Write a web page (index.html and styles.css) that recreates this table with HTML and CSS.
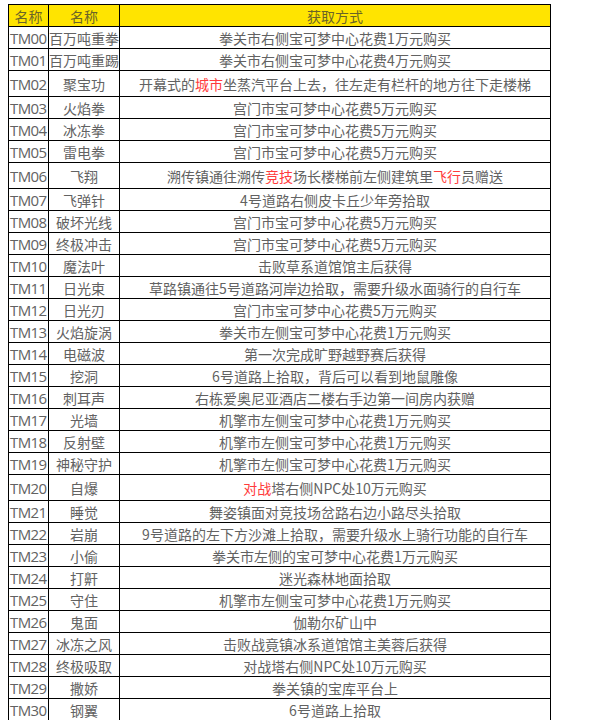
FILE: index.html
```html
<!DOCTYPE html>
<html lang="zh">
<head>
<meta charset="utf-8">
<link rel="stylesheet" href="styles.css">
</head>
<body>
<table class="tm">
<colgroup><col class="c1"><col class="c2"><col class="c3"></colgroup>
<tr class="head"><th>名称</th><th>名称</th><th>获取方式</th></tr>
<tr><td>TM00</td><td>百万吨重拳</td><td>拳关市右侧宝可梦中心花费1万元购买</td></tr>
<tr><td>TM01</td><td>百万吨重踢</td><td>拳关市右侧宝可梦中心花费4万元购买</td></tr>
<tr class="tall"><td>TM02</td><td>聚宝功</td><td>开幕式的<span class="red">城市</span>坐蒸汽平台上去，往左走有栏杆的地方往下走楼梯</td></tr>
<tr><td>TM03</td><td>火焰拳</td><td>宫门市宝可梦中心花费5万元购买</td></tr>
<tr><td>TM04</td><td>冰冻拳</td><td>宫门市宝可梦中心花费5万元购买</td></tr>
<tr><td>TM05</td><td>雷电拳</td><td>宫门市宝可梦中心花费5万元购买</td></tr>
<tr class="tall"><td>TM06</td><td>飞翔</td><td>溯传镇通往溯传<span class="red">竞技</span>场长楼梯前左侧建筑里<span class="red">飞行</span>员赠送</td></tr>
<tr><td>TM07</td><td>飞弹针</td><td>4号道路右侧皮卡丘少年旁拾取</td></tr>
<tr><td>TM08</td><td>破坏光线</td><td>宫门市宝可梦中心花费5万元购买</td></tr>
<tr><td>TM09</td><td>终极冲击</td><td>宫门市宝可梦中心花费5万元购买</td></tr>
<tr><td>TM10</td><td>魔法叶</td><td>击败草系道馆馆主后获得</td></tr>
<tr><td>TM11</td><td>日光束</td><td>草路镇通往5号道路河岸边拾取，需要升级水面骑行的自行车</td></tr>
<tr><td>TM12</td><td>日光刃</td><td>宫门市宝可梦中心花费5万元购买</td></tr>
<tr><td>TM13</td><td>火焰旋涡</td><td>拳关市左侧宝可梦中心花费1万元购买</td></tr>
<tr><td>TM14</td><td>电磁波</td><td>第一次完成旷野越野赛后获得</td></tr>
<tr><td>TM15</td><td>挖洞</td><td>6号道路上拾取，背后可以看到地鼠雕像</td></tr>
<tr><td>TM16</td><td>刺耳声</td><td>右栋爱奥尼亚酒店二楼右手边第一间房内获赠</td></tr>
<tr><td>TM17</td><td>光墙</td><td>机擎市左侧宝可梦中心花费1万元购买</td></tr>
<tr><td>TM18</td><td>反射壁</td><td>机擎市左侧宝可梦中心花费1万元购买</td></tr>
<tr><td>TM19</td><td>神秘守护</td><td>机擎市左侧宝可梦中心花费1万元购买</td></tr>
<tr class="tall"><td>TM20</td><td>自爆</td><td><span class="red">对战</span>塔右侧NPC处10万元购买</td></tr>
<tr><td>TM21</td><td>睡觉</td><td>舞姿镇面对竞技场岔路右边小路尽头拾取</td></tr>
<tr><td>TM22</td><td>岩崩</td><td>9号道路的左下方沙滩上拾取，需要升级水上骑行功能的自行车</td></tr>
<tr><td>TM23</td><td>小偷</td><td>拳关市左侧的宝可梦中心花费1万元购买</td></tr>
<tr><td>TM24</td><td>打鼾</td><td>迷光森林地面拾取</td></tr>
<tr><td>TM25</td><td>守住</td><td>机擎市左侧宝可梦中心花费1万元购买</td></tr>
<tr><td>TM26</td><td>鬼面</td><td>伽勒尔矿山中</td></tr>
<tr><td>TM27</td><td>冰冻之风</td><td>击败战竟镇冰系道馆馆主美蓉后获得</td></tr>
<tr><td>TM28</td><td>终极吸取</td><td>对战塔右侧NPC处10万元购买</td></tr>
<tr><td>TM29</td><td>撒娇</td><td>拳关镇的宝库平台上</td></tr>
<tr><td>TM30</td><td>钢翼</td><td>6号道路上拾取</td></tr>
</table>
</body>
</html>
```
FILE: styles.css
```css
html, body {
  margin: 0;
  background: #fff;
}
body {
  padding: 4px 8px;
  font-family: "Noto Sans CJK SC", "Noto Sans", sans-serif;
  font-size: 14px;
  color: #626262;
}
.tm {
  border-collapse: collapse;
  width: 542px;
  table-layout: fixed;
}
.c1 { width: 40px; }
.c2 { width: 71px; }
.c3 { width: 431px; }
.tm th, .tm td {
  border: 1px solid #000;
  padding: 0;
  height: 21px;
  line-height: 20px;
  text-align: center;
  white-space: nowrap;
  overflow: hidden;
  font-weight: normal;
}
.tm td:first-child {
  text-align: left;
  font-family: "Open Sans", "Noto Sans", sans-serif;
  font-size: 15px;
  letter-spacing: -0.6px;
  padding-left: 1px;
}
.head th {
  background: #ffe400;
  color: #6b6428;
}
.tall td {
  height: 25px;
}
.red {
  color: #ff3b3b;
}
```
